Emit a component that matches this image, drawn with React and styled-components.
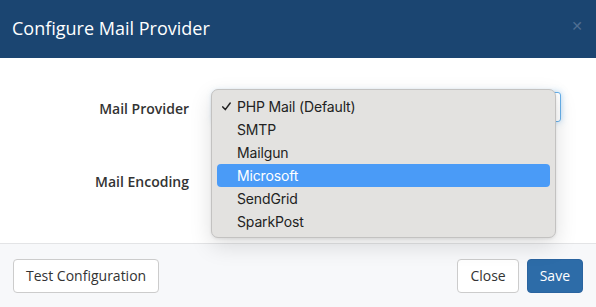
import React from "react";
import styled, { createGlobalStyle } from "styled-components";

const providers = [
	"PHP Mail (Default)",
	"SMTP",
	"Mailgun",
	"Microsoft",
	"SendGrid",
	"SparkPost",
];

const GlobalStyle = createGlobalStyle`
	html, body {
		margin: 0;
		padding: 0;
		background: #fff;
	}
	body {
		font-family: "Open Sans", "Liberation Sans", sans-serif;
		color: #333;
	}
	* {
		box-sizing: border-box;
	}
`;

const Modal = styled.div`
	width: 596px;
	height: 307px;
	display: flex;
	flex-direction: column;
	overflow: hidden;
`;

const Header = styled.div`
	height: 58px;
	flex: none;
	background: #1b4571;
	display: flex;
	align-items: center;
	justify-content: space-between;
	padding: 0 13px 0 12px;
`;

const Title = styled.h4`
	margin: 0;
	font-size: 18px;
	font-weight: 400;
	color: #fff;
	line-height: 1.4;
`;

const CloseX = styled.span`
	font-family: "DejaVu Sans", sans-serif;
	font-size: 14px;
	line-height: 1;
	color: #4f6e92;
	margin-top: -6px;
`;

const Body = styled.div`
	position: relative;
	flex: 1;
	padding: 34px 35px 0 0;
`;

const Form = styled.div`
	display: grid;
	grid-template-columns: 189px 1fr;
	column-gap: 25px;
	row-gap: 44px;
	align-items: center;
`;

const Label = styled.label`
	text-align: right;
	font-size: 14px;
	font-weight: 600;
	color: #333;
	padding-top: ${(props) => (props.$nudge ? "3px" : "0")};
`;

const SelectBox = styled.div`
	height: 30px;
	width: ${(props) => props.$width || "auto"};
	border: 1px solid ${(props) => (props.$focus ? "#66afe9" : "#ccc")};
	border-radius: 3px;
	box-shadow: ${(props) =>
		props.$focus ? "0 0 6px rgba(102,175,233,0.5)" : "none"};
	display: flex;
	align-items: center;
	justify-content: flex-end;
	padding-right: 3px;
	font-size: 7px;
	color: #444;
`;

const Menu = styled.ul`
	position: absolute;
	left: 211px;
	top: 31px;
	width: 345px;
	height: 149px;
	margin: 0;
	padding: 5px 5px 5px;
	list-style: none;
	background: #e3e2e0;
	border: 1px solid #c3c2c1;
	border-radius: 7px;
	box-shadow: 0 8px 22px rgba(0, 0, 0, 0.13), 0 1px 3px rgba(0, 0, 0, 0.08);
	font-family: Inter, "Liberation Sans", sans-serif;
`;

const MenuItem = styled.li`
	position: relative;
	height: 23px;
	line-height: 23px;
	padding-left: 20px;
	border-radius: 4px;
	font-size: 14px;
	letter-spacing: -0.15px;
	color: ${(props) => (props.$active ? "#fff" : "#222")};
	background: ${(props) => (props.$active ? "#4a9bf7" : "transparent")};
`;

const Check = styled.svg`
	position: absolute;
	left: 5px;
	top: 7px;
	width: 9px;
	height: 9px;
`;

const Footer = styled.div`
	height: 64px;
	flex: none;
	background: #f7f8fa;
	border-top: 1px solid #e3e4e6;
	display: flex;
	align-items: center;
	justify-content: space-between;
	padding: 0 13px 0 13px;
`;

const Group = styled.div`
	display: flex;
	gap: 8px;
`;

const Button = styled.button`
	height: 34px;
	padding: 0 12px;
	font-family: "Open Sans", "Liberation Sans", sans-serif;
	font-size: 14px;
	border-radius: 4px;
	border: 1px solid ${(props) => (props.$primary ? "#2a64a0" : "#ccc")};
	background: ${(props) => (props.$primary ? "#2d6ca8" : "#fff")};
	color: ${(props) => (props.$primary ? "#fff" : "#333")};
	cursor: pointer;
`;

const App = () => {
	return (
		<Modal>
			<GlobalStyle />
			<Header>
				<Title>Configure Mail Provider</Title>
				<CloseX>✕</CloseX>
			</Header>
			<Body>
				<Form>
					<Label $nudge>Mail Provider</Label>
					<SelectBox $focus>▼</SelectBox>
					<Label>Mail Encoding</Label>
					<SelectBox $width="220px">▼</SelectBox>
				</Form>
				<Menu>
					{providers.map((name, i) => (
						<MenuItem key={name} $active={name === "Microsoft"}>
							{i === 0 && (
								<Check viewBox="0 0 9 9">
									<path
										d="M0.8 4.9 L3.3 7.6 L8.2 1"
										fill="none"
										stroke="#222"
										strokeWidth="1.5"
										strokeLinecap="round"
										strokeLinejoin="round"
									/>
								</Check>
							)}
							{name}
						</MenuItem>
					))}
				</Menu>
			</Body>
			<Footer>
				<Button>Test Configuration</Button>
				<Group>
					<Button>Close</Button>
					<Button $primary>Save</Button>
				</Group>
			</Footer>
		</Modal>
	);
};

export default App;
